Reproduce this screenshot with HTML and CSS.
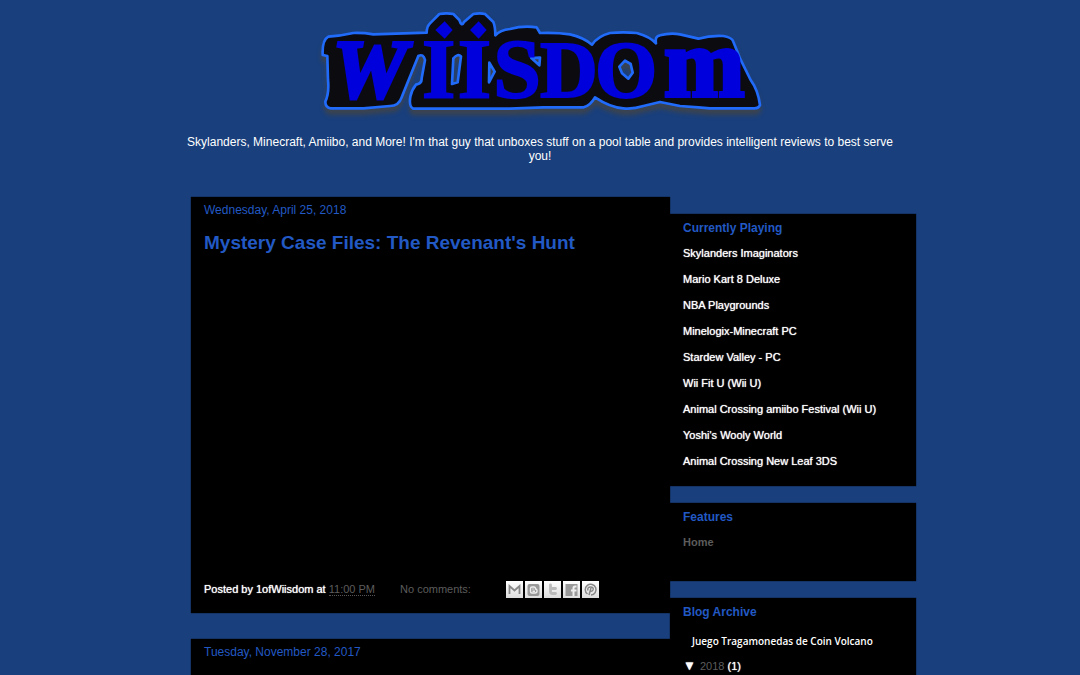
FILE: index.html
```
<!DOCTYPE html>
<html lang="en">
<head>
    <meta charset="UTF-8">
    <meta name="viewport" content="width=device-width, initial-scale=1.0">
    <title>Wiisdom</title>
    <link rel="stylesheet" href="styles.css">
</head>
<body>
    <div class="content">
        <!-- Header -->
        <header class="header">
            <h1>
                <svg class="logo" viewBox="15 0 1350 375" role="img" aria-label="Wiisdom">
                    <path class="logo-back" fill-rule="evenodd" d="M38 165Q36 120 55 110Q90 108 130 99Q160 98 190 103L350 98Q350 80 360 70L388 42Q410 38 430 42L448 60Q455 82 462 66L490 42Q510 38 525 42L550 66Q556 80 556 106Q570 90 600 87Q640 76 680 82L690 99Q740 97 780 103Q820 112 846 134Q864 108 900 99Q940 95 980 99Q1020 110 1038 130Q1034 108 1050 106Q1080 98 1110 103L1165 116Q1200 106 1240 108Q1266 112 1270 125L1290 175L1322 240Q1344 270 1350 315Q1346 326 1330 325H1200L1165 322L1110 318L1050 306L1000 318Q970 328 940 325Q900 322 855 292Q840 318 820 322H700L600 326H310Q296 320 301 290Q305 270 318 254Q336 250 335 235L345 180Q340 160 325 168L275 292Q266 318 240 318L160 325H62Q46 322 46 305Q58 280 54 240L52 168ZM430 175Q444 160 453 169L443 247L426 252ZM538 188L554 215L537 247ZM664 174L690 173L688 196ZM928 200L945 182L962 192L968 218L955 236L936 220Z"/>
                    <g class="logo-text">
                        <text class="logo-slant" y="290" x="68">W</text>
                        <text y="294"><tspan x="336">I</tspan><tspan x="443">I</tspan><tspan x="550">S</tspan></text>
                        <text class="logo-round" y="291"><tspan x="690">D</tspan><tspan x="855">O</tspan></text>
                        <text class="logo-end" y="289" x="1062">m</text>
                    </g>
                    <path class="logo-dots" d="M404 64L428 90L404 116L376 90ZM506 64L530 90L506 116L480 90Z"/>
                </svg>
            </h1>
            <p class="description">Skylanders, Minecraft, Amiibo, and More! I'm that guy that unboxes stuff on a pool table and provides intelligent reviews to best serve you!</p>
        </header>

        <div class="columns">
            <!-- Posts -->
            <main class="main">
                <article class="post">
                    <h2 class="date">Wednesday, April 25, 2018</h2>
                    <h3 class="title">Mystery Case Files: The Revenant's Hunt</h3>
                    <div class="video"></div>
                    <div class="post-footer">
                        <span class="byline">Posted by 1ofWiisdom at <a href="#"><abbr title="2018-04-25T23:00:00">11:00 PM</abbr></a></span>
                        <a class="comments" href="#">No comments:</a>
                        <div class="share">
                            <a href="#" aria-label="Email This"><svg viewBox="0 0 17 17"><path d="M3.500 13V5L8.500 9.500L13.500 5V13" fill="none" stroke="#888" stroke-width="1.800"/></svg></a>
                            <a href="#" aria-label="BlogThis!"><svg viewBox="0 0 17 17"><rect x="2.500" y="3" width="12" height="12" rx="2" fill="#999"/><path d="M7 6H9Q10.500 6 10.500 8Q12 8 12 9.500V10Q12 12 10 12H7Q5.500 12 5.500 10.500V7.500Q5.500 6 7 6ZM7.500 8H8.500M7.500 10.200H10" fill="none" stroke="#eee" stroke-width="1.400"/></svg></a>
                            <a href="#" aria-label="Share to Twitter"><svg viewBox="0 0 17 17"><path d="M6.500 4V10.500Q6.500 12.500 8.500 12.500H11.500M6.500 7.500H11.500" fill="none" stroke="#bbb" stroke-width="2.800" stroke-linecap="round"/></svg></a>
                            <a href="#" aria-label="Share to Facebook"><svg viewBox="0 0 17 17"><rect x="2.500" y="3" width="12" height="12" fill="#999"/><path d="M13.500 5.500H12Q10.500 5.500 10.500 7V15M8 9.500H13.500" fill="none" stroke="#eee" stroke-width="2"/></svg></a>
                            <a href="#" aria-label="Share to Pinterest"><svg viewBox="0 0 17 17"><path d="M5.500 13A5.400 5.400 0 1 1 9 14M7 14L9 7M6 9.500Q5 6 8.500 6Q12 6 11 9Q10 11 8 10" fill="none" stroke="#888" stroke-width="1.500"/></svg></a>
                        </div>
                    </div>
                </article>
                <article class="post">
                    <h2 class="date">Tuesday, November 28, 2017</h2>
                </article>
            </main>

            <!-- Sidebar -->
            <aside class="sidebar">
                <section class="widget">
                    <h2>Currently Playing</h2>
                    <ul>
                        <li>Skylanders Imaginators</li>
                        <li>Mario Kart 8 Deluxe</li>
                        <li>NBA Playgrounds</li>
                        <li>Minelogix-Minecraft PC</li>
                        <li>Stardew Valley - PC</li>
                        <li>Wii Fit U (Wii U)</li>
                        <li>Animal Crossing amiibo Festival (Wii U)</li>
                        <li>Yoshi's Wooly World</li>
                        <li>Animal Crossing New Leaf 3DS</li>
                    </ul>
                </section>
                <section class="widget features">
                    <h2>Features</h2>
                    <ul>
                        <li><a href="#">Home</a></li>
                    </ul>
                </section>
                <section class="widget">
                    <h2>Blog Archive</h2>
                    <p class="archive-link">Juego Tragamonedas de Coin Volcano</p>
                    <div class="archive-year"><span class="toggle">▼</span><a href="#">2018</a> (1)</div>
                </section>
            </aside>
        </div>
    </div>
</body>
</html>
```

FILE: styles.css
```
body {
    margin: 0;
    background: #193f7c;
    color: #fff;
    font-family: "Liberation Sans", Arial, sans-serif;
    font-size: 11px;
    overflow-x: hidden;
}
h1, h2, h3, p, ul {
    margin: 0;
    padding: 0;
}
ul {
    list-style: none;
}
a {
    color: #5c5c5c;
    text-decoration: none;
}
a:hover {
    color: #2259c4;
}
.content {
    max-width: 698px;
    margin: 0 auto;
}

/* Header */
.header {
    text-align: center;
    padding-bottom: 34px;
}
.logo {
    display: block;
    width: 450px;
    max-width: 100%;
    margin: 0 auto 10px;
    overflow: visible;
}
.logo-back {
    fill: #0c0b10;
    stroke: #216bfa;
    stroke-width: 8px;
    stroke-linejoin: round;
    filter: drop-shadow(0 16px 6px #3a4350);
}
.logo-text {
    fill: #0000dc;
    stroke: #0000dc;
    stroke-width: 6px;
    font: bold 257px "Liberation Serif", serif;
}
.logo-slant {
    font-style: italic;
    font-size: 250px;
    stroke-width: 12px;
}
.logo-round {
    font-size: 240px;
}
.logo-end {
    font-size: 290px;
    stroke-width: 12px;
}
.logo-dots {
    fill: #0000dc;
}
.description {
    margin: 0 -8px;
    font-size: 12px;
    line-height: 14px;
}

/* Columns */
.columns {
    display: flex;
    align-items: flex-start;
    margin-right: -27px;
}
.main {
    flex: 1;
    min-width: 0;
}
.sidebar {
    width: 246px;
    padding-top: 17px;
}

/* Posts */
.post {
    min-height: 60px;
    margin-bottom: 26px;
    padding: 5px 13px 15px;
    background: #000;
    box-shadow: 0 0 1px #000;
}
.date {
    font-size: 12px;
    line-height: 16px;
    font-weight: normal;
    color: #2259c4;
}
.title {
    margin-top: 13px;
    font-size: 19px;
    line-height: 24px;
    color: #2259c4;
}
.video {
    height: 325px;
}
.post-footer {
    display: flex;
    align-items: center;
    line-height: 18px;
}
.byline,
.widget {
    text-shadow: 0 0 1px;
}
.byline a {
    text-shadow: none;
}
.byline abbr {
    text-decoration: none;
    border-bottom: 1px dotted #555;
}
.comments {
    margin-left: 25px;
}
.share {
    display: flex;
    gap: 2px;
    margin-left: 35px;
}
.share a {
    width: 17px;
    height: 17px;
    background: linear-gradient(#fff, #ddd);
}
.share svg {
    display: block;
}

/* Sidebar */
.widget {
    margin-bottom: 17px;
    padding: 6px 13px 12px;
    background: #000;
    box-shadow: 0 0 1px #000;
}
.widget h2 {
    font-size: 12px;
    line-height: 16px;
    color: #2259c4;
    margin-bottom: 4px;
    text-shadow: none;
}
.widget li {
    line-height: 26px;
}
.features {
    padding-bottom: 26px;
}
.features a {
    font-weight: bold;
    text-shadow: none;
}
.archive-link {
    padding: 8px 9px 0;
    font-family: "Open Sans", sans-serif;
    font-weight: 600;
    font-size: 10px;
    line-height: 18px;
    text-shadow: none;
}
.archive-year {
    margin-top: 8px;
    line-height: 16px;
}
.archive-year a {
    text-shadow: none;
}
.toggle {
    display: inline-block;
    width: 17px;
    font-size: 13px;
}
```
